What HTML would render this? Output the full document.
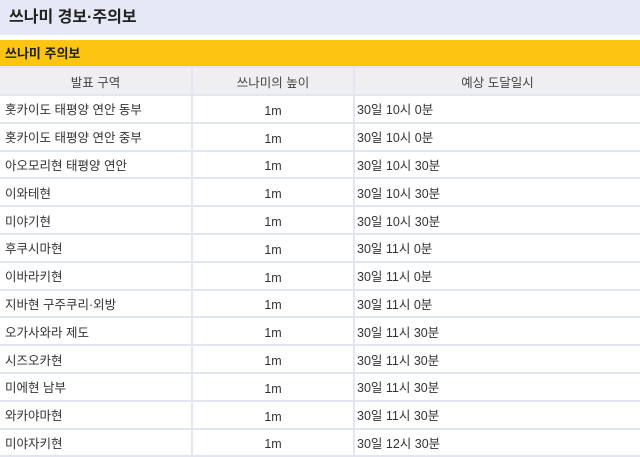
<!DOCTYPE html><html><head><meta charset="utf-8"><style>
body{margin:0;width:640px;height:456px;overflow:hidden;background:#fff;font-family:"Liberation Sans","Noto Sans CJK KR",sans-serif;color:#333}
.top{height:35px;background:#e4e9f5;font-size:16px;font-weight:bold;line-height:35px;padding-left:9px;color:#222}
.bar{position:absolute;top:40px;left:0;width:640px;height:27px;background:#fec412;font-size:13px;font-weight:bold;line-height:27px;padding-left:5px;box-sizing:border-box;color:#222}
table{position:absolute;top:66px;left:0;width:642px;border-collapse:collapse;font-size:12.5px}
td,th{border:2px solid #e2e6f0;height:25.8px;padding:0 5px;font-weight:normal}
th{background:#efeff1;text-align:center;color:#444;height:26px}
td:nth-child(2){text-align:center}
td:nth-child(2) span{position:relative;top:2px}
td:nth-child(3){padding-left:2px}
tr td:first-child,tr th:first-child{border-left:none}
</style></head><body>
<div class="top">쓰나미 경보·주의보</div>
<div class="bar">쓰나미 주의보</div>
<table>
<tr><th style="width:181px">발표 구역</th><th style="width:150px">쓰나미의 높이</th><th>예상 도달일시</th></tr>
<tr><td>홋카이도 태평양 연안 동부</td><td><span>1m</span></td><td>30일 10시 0분</td></tr>
<tr><td>홋카이도 태평양 연안 중부</td><td><span>1m</span></td><td>30일 10시 0분</td></tr>
<tr><td>아오모리현 태평양 연안</td><td><span>1m</span></td><td>30일 10시 30분</td></tr>
<tr><td>이와테현</td><td><span>1m</span></td><td>30일 10시 30분</td></tr>
<tr><td>미야기현</td><td><span>1m</span></td><td>30일 10시 30분</td></tr>
<tr><td>후쿠시마현</td><td><span>1m</span></td><td>30일 11시 0분</td></tr>
<tr><td>이바라키현</td><td><span>1m</span></td><td>30일 11시 0분</td></tr>
<tr><td>지바현 구주쿠리·외방</td><td><span>1m</span></td><td>30일 11시 0분</td></tr>
<tr><td>오가사와라 제도</td><td><span>1m</span></td><td>30일 11시 30분</td></tr>
<tr><td>시즈오카현</td><td><span>1m</span></td><td>30일 11시 30분</td></tr>
<tr><td>미에현 남부</td><td><span>1m</span></td><td>30일 11시 30분</td></tr>
<tr><td>와카야마현</td><td><span>1m</span></td><td>30일 11시 30분</td></tr>
<tr><td>미야자키현</td><td><span>1m</span></td><td>30일 12시 30분</td></tr>
</table>
</body></html>
